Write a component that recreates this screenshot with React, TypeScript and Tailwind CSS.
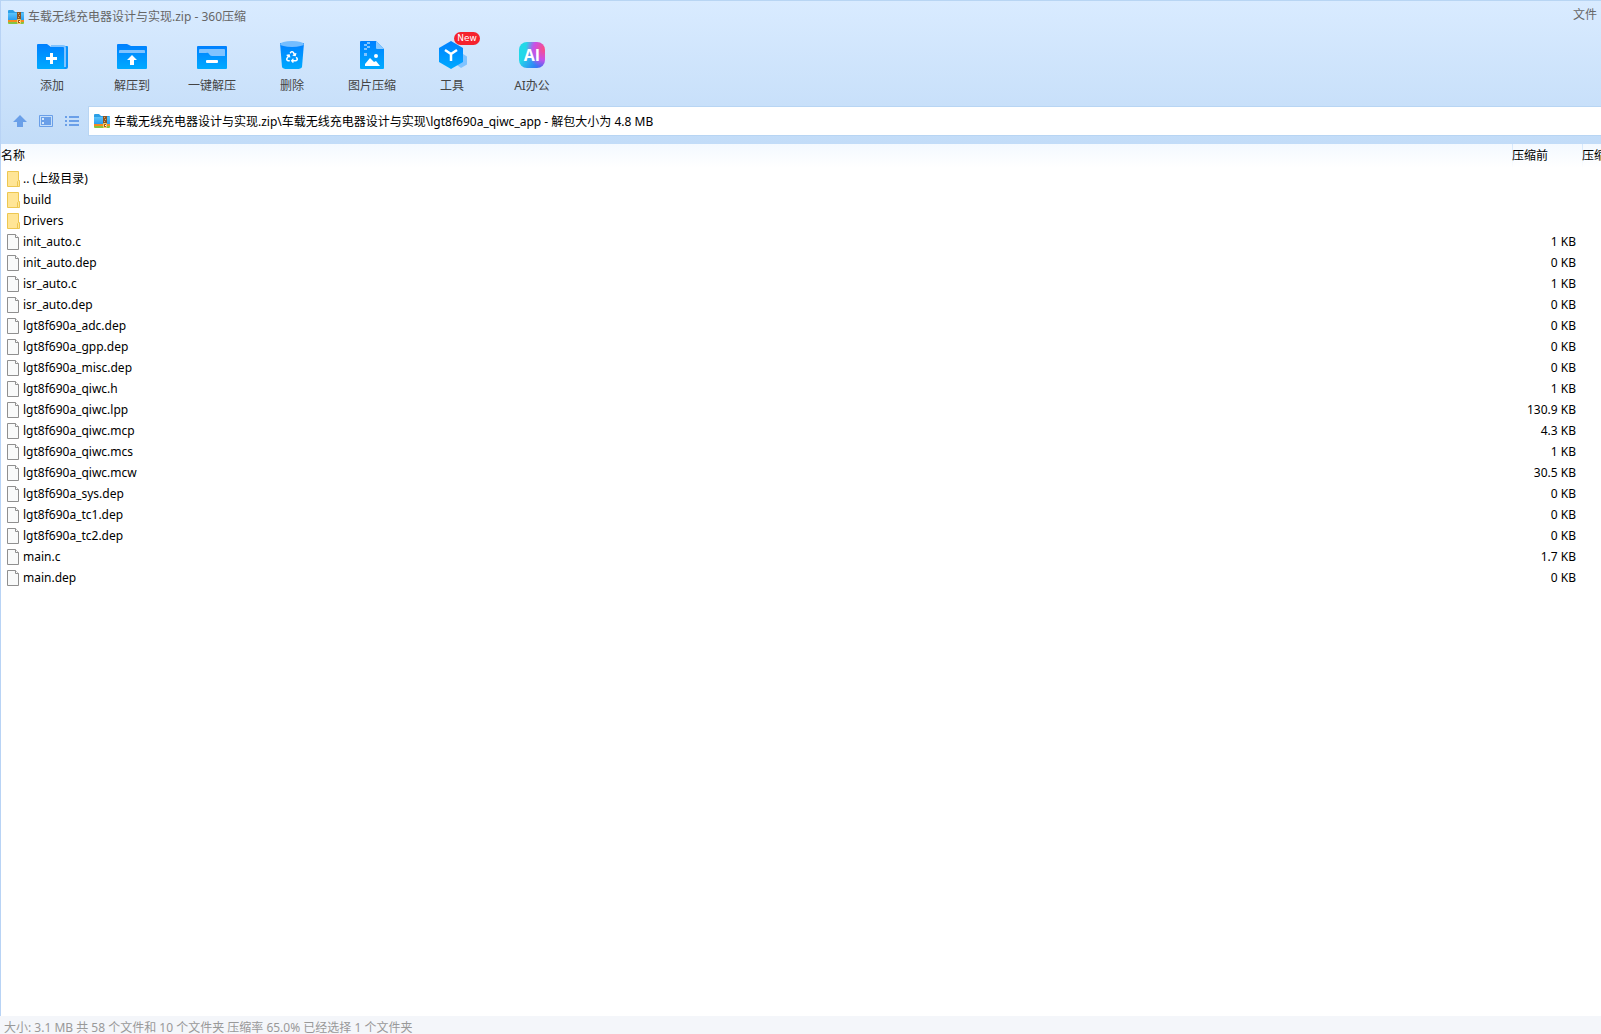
import type { ReactNode } from "react";
import { FaRecycle } from "react-icons/fa";

type Entry = { name: string; size?: string };

const entries: Entry[] = [
  { name: ".. (上级目录)" },
  { name: "build" },
  { name: "Drivers" },
  { name: "init_auto.c", size: "1 KB" },
  { name: "init_auto.dep", size: "0 KB" },
  { name: "isr_auto.c", size: "1 KB" },
  { name: "isr_auto.dep", size: "0 KB" },
  { name: "lgt8f690a_adc.dep", size: "0 KB" },
  { name: "lgt8f690a_gpp.dep", size: "0 KB" },
  { name: "lgt8f690a_misc.dep", size: "0 KB" },
  { name: "lgt8f690a_qiwc.h", size: "1 KB" },
  { name: "lgt8f690a_qiwc.lpp", size: "130.9 KB" },
  { name: "lgt8f690a_qiwc.mcp", size: "4.3 KB" },
  { name: "lgt8f690a_qiwc.mcs", size: "1 KB" },
  { name: "lgt8f690a_qiwc.mcw", size: "30.5 KB" },
  { name: "lgt8f690a_sys.dep", size: "0 KB" },
  { name: "lgt8f690a_tc1.dep", size: "0 KB" },
  { name: "lgt8f690a_tc2.dep", size: "0 KB" },
  { name: "main.c", size: "1.7 KB" },
  { name: "main.dep", size: "0 KB" },
];

function ArchiveIcon() {
  return (
    <svg className="h-4 w-4 shrink-0" viewBox="0 0 16 16" aria-hidden="true">
      <path d="M0 2a1 1 0 0 1 1-1h4l2 2h8a1 1 0 0 1 1 1v7H0z" fill="#2c9fe6" />
      <path d="M0 4h16v7H0z" fill="url(#archive-blue)" />
      <path d="M0 11h16v2H0z" fill="#f58a1f" />
      <path d="M0 13h16v1a1 1 0 0 1-1 1H1a1 1 0 0 1-1-1z" fill="#86c440" />
      <path d="M9 3h4v8H9z" fill="#8c5523" />
      <path d="M10 4h1v1h-1zM11 6h1v1h-1zM10 8h1v1h-1z" fill="#d9a866" />
      <path d="M9.500 10.500h3v4h-3z" fill="#a75a12" stroke="#f5cf6b" />
      <path d="M11 12h1v1h-1z" fill="#fff" />
    </svg>
  );
}

function FolderIcon() {
  return (
    <svg className="h-4 w-[14px] shrink-0" viewBox="0 0 14 16" aria-hidden="true">
      <path d="M.5.500h11v9h1v6H.500z" fill="#ffe596" stroke="#edc751" />
      <path d="M10.500 15v-4.500l1-1" fill="none" stroke="#edc751" />
    </svg>
  );
}

function FileIcon() {
  return (
    <svg className="h-4 w-[14px] shrink-0" viewBox="0 0 14 16" aria-hidden="true">
      <path d="M.5.500h8l3 3v12H.500z" fill="#f9fafa" stroke="#8f8f8f" />
      <path d="M8.500.500v3h3" fill="#fff" stroke="#8f8f8f" />
    </svg>
  );
}

function ToolSvg({ children }: { children: ReactNode }) {
  return (
    <svg className="h-8 w-10" viewBox="0 0 40 32" aria-hidden="true">
      {children}
    </svg>
  );
}

function AddIcon() {
  return (
    <ToolSvg>
      <path d="M30 8h5a1 1 0 0 1 1 1v20a2 2 0 0 1-2 2h-4z" fill="#0a93fb" />
      <path d="M5 7a1 1 0 0 1 1-1h9l4 3h14v20a2 2 0 0 1-2 2H6a1 1 0 0 1-1-1z" fill="url(#tool-blue)" />
      <path d="M19 8h12a2 2 0 0 1 2 2V29" fill="none" stroke="#80c3ff" strokeWidth="2" />
      <path d="M18 15h3v4h4v3h-4v4h-3v-4h-4v-3h4z" fill="#fff" />
    </ToolSvg>
  );
}

function ExtractToIcon() {
  return (
    <ToolSvg>
      <path d="M5 7a1 1 0 0 1 1-1h9l4 2h15a1 1 0 0 1 1 1v21a1 1 0 0 1-1 1H6a1 1 0 0 1-1-1z" fill="url(#tool-blue)" />
      <path d="M7 15v-2a1 1 0 0 1 1-1h24a1 1 0 0 1 1 1v2z" fill="#80c3ff" />
      <path d="m20 17 5 5h-3v5h-4v-5h-3z" fill="#fff" />
    </ToolSvg>
  );
}

function QuickExtractIcon() {
  return (
    <ToolSvg>
      <rect x="5" y="8" width="30" height="23" rx="1" fill="url(#tool-blue)" />
      <path d="M7 15v-3a1 1 0 0 1 1-1h24a1 1 0 0 1 1 1v6H20q-2 0-3-2t-3-1z" fill="#80c3ff" />
      <rect x="14" y="22" width="12" height="3" rx="1" fill="#fff" />
    </ToolSvg>
  );
}

function DeleteIcon() {
  return (
    <ToolSvg>
      <path d="M8 5h24l-2 24q-1 2-5 2H15q-4 0-5-2z" fill="url(#tool-blue)" />
      <ellipse cx="20" cy="6" rx="12" ry="3" fill="#74bdff" />
      <FaRecycle x={14} y={13} size={12} color="#fff" />
    </ToolSvg>
  );
}

function ImageIcon() {
  return (
    <ToolSvg>
      <path d="M8 4a1 1 0 0 1 1-1h15l8 8v19a1 1 0 0 1-1 1H9a1 1 0 0 1-1-1z" fill="url(#tool-blue)" />
      <path d="M24 3l8 8h-7a1 1 0 0 1-1-1z" fill="#8ccaff" />
      <path d="M15 4h3v2h-3zM12 6h3v2h-3zM15 8h3v2h-3zM12 10h3v2h-3zM12 15h3v3h-3z" fill="#80c3ff" />
      <path d="M13 28v-2l5-6 4 4 2-1 4 5z" fill="#fff" />
      <circle cx="24" cy="18" r="2" fill="#fff" />
    </ToolSvg>
  );
}

function ToolboxIcon() {
  return (
    <ToolSvg>
      <path d="m31 16 4 2.500v8L29 30l-4-3z" fill="#80c3ff" />
      <path d="m19 3 12 7v14l-12 7-12-7V10z" fill="url(#tool-blue)" />
      <path d="m13 12 6 4 6-4M19 16v7" fill="none" stroke="#fff" strokeWidth="2.500" />
    </ToolSvg>
  );
}

function AiIcon() {
  return (
    <span className="flex h-8 items-center pt-[2px]">
      <span className="flex h-[26px] w-[26px] items-center justify-center rounded-lg bg-[radial-gradient(circle_at_100%_25%,#ff4d7d_0%,#c850e8_35%,transparent_60%),linear-gradient(120deg,#22d8e8_30%,#2f86f6_70%,#5b50f2_100%)] font-['Open_Sans','Noto_Sans',sans-serif] text-base leading-none font-bold text-white">
        AI
      </span>
    </span>
  );
}

const tools: { label: string; icon: ReactNode; isNew?: boolean }[] = [
  { label: "添加", icon: <AddIcon /> },
  { label: "解压到", icon: <ExtractToIcon /> },
  { label: "一键解压", icon: <QuickExtractIcon /> },
  { label: "删除", icon: <DeleteIcon /> },
  { label: "图片压缩", icon: <ImageIcon /> },
  { label: "工具", icon: <ToolboxIcon />, isNew: true },
  { label: "AI办公", icon: <AiIcon /> },
];

function TitleBar() {
  return (
    <header className="flex h-8 items-center justify-between pr-1 pl-[7px] text-[#666]">
      <h1 className="flex items-center gap-1">
        <ArchiveIcon />
        车载无线充电器设计与实现.zip - 360压缩
      </h1>
      <button type="button" className="h-7 self-start">
        文件
      </button>
    </header>
  );
}

function Toolbar() {
  return (
    <nav className="flex pl-[11px] text-[#444]">
      {tools.map((tool) => (
        <button
          key={tool.label}
          type="button"
          className="relative flex h-[73px] w-20 flex-col items-center gap-2 pt-[5px] leading-4"
        >
          {tool.icon}
          {tool.label}
          {tool.isNew && (
            <span className="absolute -top-px left-[42px] h-[13px] w-[26px] rounded-full bg-[#f5222d] text-center font-['DejaVu_Sans',sans-serif] text-[9px] leading-[13px] text-white">
              New
            </span>
          )}
        </button>
      ))}
    </nav>
  );
}

function AddressBar() {
  return (
    <div className="flex items-center pl-3">
      <div className="flex w-[75px] items-center gap-3 text-[#6a9fe8]">
        <button type="button" aria-label="向上">
          <svg className="h-[14px] w-[14px]" viewBox="0 0 14 14" aria-hidden="true">
            <path d="m7 1 7 7h-4v5H4V8H0z" fill="currentColor" />
          </svg>
        </button>
        <button type="button" aria-label="预览">
          <svg className="h-[14px] w-[14px]" viewBox="0 0 14 14" aria-hidden="true">
            <path d="M.5 1.500h13v11H.500z" fill="none" stroke="currentColor" />
            <path d="M2 3h10v8H2z" fill="currentColor" />
            <path d="M3 4h2v2H3zM3 8h2v2H3z" fill="#d4e7fc" />
          </svg>
        </button>
        <button type="button" aria-label="列表">
          <svg className="h-[14px] w-[14px]" viewBox="0 0 14 14" aria-hidden="true">
            <path d="M0 2h2v2H0zM0 6h2v2H0zM0 10h2v2H0zM4 2h10v2H4zM4 6h10v2H4zM4 10h10v2H4z" fill="currentColor" />
          </svg>
        </button>
      </div>
      <div className="flex h-[30px] flex-1 items-center gap-1 border-y border-l border-[#b8d5f3] bg-white pl-[5px]">
        <ArchiveIcon />
        <input
          type="text"
          aria-label="路径"
          className="min-w-0 flex-1 pt-px text-black outline-none"
          defaultValue="车载无线充电器设计与实现.zip\车载无线充电器设计与实现\lgt8f690a_qiwc_app - 解包大小为 4.8 MB"
        />
      </div>
    </div>
  );
}

function FileTable() {
  return (
    <table className="w-full table-fixed border-separate border-spacing-0 whitespace-nowrap text-black">
      <colgroup>
        <col />
        <col className="w-[70px]" />
        <col className="w-[19px]" />
      </colgroup>
      <thead>
        <tr className="h-6 bg-linear-to-b from-[#f3f9ff] to-white text-left">
          <th className="p-0 font-normal">名称</th>
          <th className="bg-linear-to-b from-[#d3e7fc] to-white bg-[length:1px_100%] bg-no-repeat p-0 font-normal">压缩前</th>
          <th className="overflow-hidden bg-linear-to-b from-[#d3e7fc] to-white bg-[length:1px_100%] bg-no-repeat p-0 font-normal">压缩</th>
        </tr>
      </thead>
      <tbody>
        {entries.map((entry) => (
          <tr key={entry.name} className="h-[21px]">
            <td className="p-0 pl-[6px]">
              <span className="flex items-center gap-[2px]">
                {entry.size ? <FileIcon /> : <FolderIcon />}
                {entry.name}
              </span>
            </td>
            <td className="p-0 pr-[6px] text-right">{entry.size}</td>
            <td className="p-0" />
          </tr>
        ))}
      </tbody>
    </table>
  );
}

export default function App() {
  return (
    <div className="flex h-screen flex-col overflow-hidden bg-white font-['Noto_Sans','Noto_Sans_CJK_SC',sans-serif] text-xs">
      <svg className="absolute h-0 w-0" aria-hidden="true">
        <linearGradient id="tool-blue" x1="0" y1="0" x2="0" y2="1">
          <stop offset="0" stopColor="#0080ff" />
          <stop offset="1" stopColor="#00aaff" />
        </linearGradient>
        <linearGradient id="archive-blue" x1="0" y1="0" x2="0" y2="1">
          <stop offset="0" stopColor="#5cc4fa" />
          <stop offset="1" stopColor="#2a9df0" />
        </linearGradient>
      </svg>
      <div className="flex flex-1 flex-col border-l border-[#b8d3f5]">
        <div className="border-t border-[#b8d5f3] bg-linear-to-b from-[#d9ebff] to-[#c2dcf8] pb-2">
          <TitleBar />
          <Toolbar />
          <AddressBar />
        </div>
        <main className="flex-1">
          <FileTable />
        </main>
      </div>
      <footer className="h-[18px] bg-[#f4f6fa] pl-1 leading-6 text-[#999]">
        大小: 3.1 MB 共 58 个文件和 10 个文件夹 压缩率 65.0% 已经选择 1 个文件夹
      </footer>
    </div>
  );
}
